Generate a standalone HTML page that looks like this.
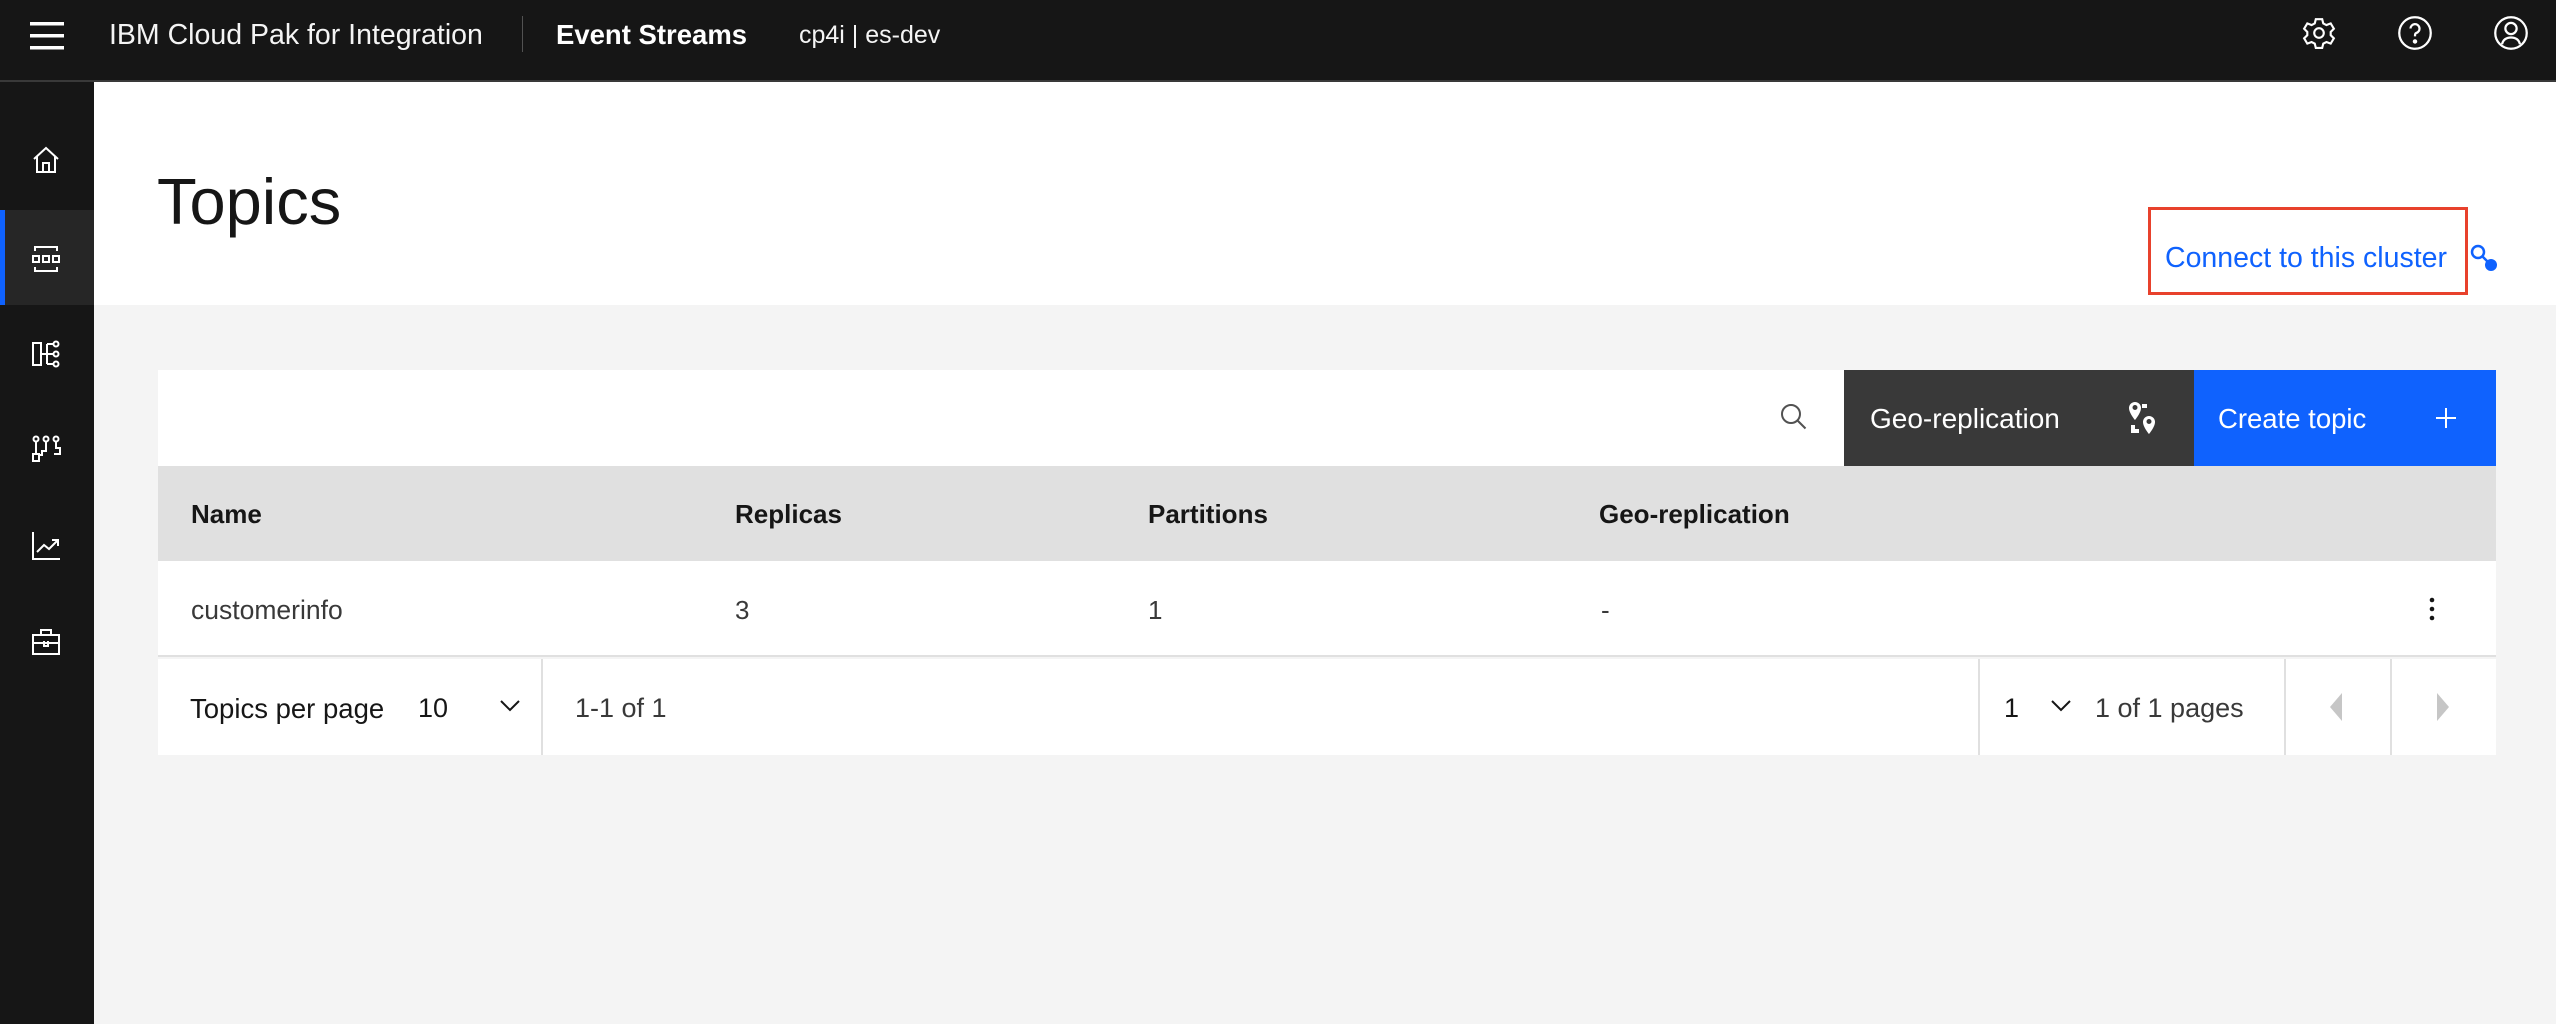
<!DOCTYPE html>
<html><head><meta charset="utf-8"><style>
*{margin:0;padding:0;box-sizing:border-box}
body{width:2556px;height:1024px;overflow:hidden;background:#f4f4f4;font-family:"Liberation Sans",sans-serif;position:relative;color:#161616}
.a{position:absolute;white-space:nowrap}
svg{position:absolute;overflow:visible}
</style></head><body>
<div class="a" style="left:0;top:0;width:2556px;height:80px;background:#161616"></div>
<div class="a" style="left:0;top:80px;width:2556px;height:2px;background:#393939"></div>
<div class="a" style="left:0;top:82px;width:94px;height:942px;background:#161616"></div>
<div class="a" style="left:0;top:210px;width:94px;height:95px;background:#262626"></div>
<div class="a" style="left:0;top:210px;width:5px;height:95px;background:#0f62fe"></div>
<div class="a" style="left:94px;top:82px;width:2462px;height:223px;background:#fff"></div>

<svg style="left:30px;top:22px" width="34" height="28"><rect x="0" y="0" width="34" height="3.5" fill="#fff"/><rect x="0" y="12" width="34" height="3.5" fill="#fff"/><rect x="0" y="24" width="34" height="3.5" fill="#fff"/></svg>
<div class="a" style="left:109px;top:19px;font-size:28.5px;color:#f4f4f4">IBM Cloud Pak for Integration</div>
<div class="a" style="left:522px;top:16px;width:1px;height:36px;background:#525252"></div>
<div class="a" style="left:556px;top:19px;font-size:27.5px;font-weight:bold;color:#fff">Event Streams</div>
<div class="a" style="left:799px;top:21px;font-size:25px;color:#f4f4f4">cp4i | es-dev</div>

<svg style="left:2302px;top:15px" width="34" height="36" viewBox="0 0 32 32" fill="none" stroke="#fff" stroke-width="2"><path d="M13 3h6l1 4 3 1.5 4-1.5 3 5-3 3v3l3 3-3 5-4-1.5-3 1.5-1 4h-6l-1-4-3-1.5-4 1.5-3-5 3-3v-3l-3-3 3-5 4 1.5 3-1.5z"/><circle cx="16" cy="16" r="4.5"/></svg>
<svg style="left:2397px;top:15px" width="36" height="36" viewBox="0 0 32 32" fill="none" stroke="#fff" stroke-width="2"><circle cx="16" cy="16" r="14"/><path d="M12 12a4 4 0 1 1 5 4c-1 .5-1 1.5-1 3"/><circle cx="16" cy="23.5" r="1" fill="#fff"/></svg>
<svg style="left:2493px;top:15px" width="36" height="36" viewBox="0 0 32 32" fill="none" stroke="#fff" stroke-width="2"><circle cx="16" cy="16" r="14"/><circle cx="16" cy="12" r="5"/><path d="M8 26c1-4 4-6 8-6s7 2 8 6"/></svg>

<svg style="left:32px;top:146px" width="28" height="28" viewBox="0 0 28 28" fill="none" stroke="#fff" stroke-width="2"><path d="M2 13L14 2l12 11M5 10v16h18V10M11 26v-9h6v9"/></svg>
<svg style="left:32px;top:245px" width="28" height="28" viewBox="0 0 28 28" fill="none" stroke="#fff" stroke-width="2"><path d="M3 6V2h22v4M3 22v4h22v-4"/><rect x="1" y="11" width="6" height="6"/><rect x="11" y="11" width="6" height="6"/><rect x="21" y="11" width="6" height="6"/></svg>
<svg style="left:32px;top:340px" width="28" height="28" viewBox="0 0 28 28" fill="none" stroke="#fff" stroke-width="2"><rect x="1" y="3" width="8" height="22"/><path d="M9 14h13M15 4v20M15 4h6M15 24h6"/><circle cx="24" cy="4" r="2.5"/><circle cx="24" cy="14" r="2.5"/><circle cx="24" cy="24" r="2.5"/></svg>
<svg style="left:32px;top:435px" width="28" height="28" viewBox="0 0 28 28" fill="none" stroke="#fff" stroke-width="2"><circle cx="4" cy="4" r="2.5"/><circle cx="14" cy="4" r="2.5"/><circle cx="24" cy="4" r="2.5"/><path d="M4 7v12M14 7v9h-4v4h-4M24 7v6h4v6h-6"/><rect x="1" y="19" width="6" height="7"/></svg>
<svg style="left:32px;top:532px" width="28" height="28" viewBox="0 0 28 28" fill="none" stroke="#fff" stroke-width="2"><path d="M1 0v27h27M5 20l7-7 5 4 9-9M20 8h6v6"/></svg>
<svg style="left:32px;top:628px" width="28" height="28" viewBox="0 0 28 28" fill="none" stroke="#fff" stroke-width="2"><rect x="1" y="7" width="26" height="19"/><path d="M9 7V2h10v5M1 15h26M12 13v5h4v-5"/></svg>

<div class="a" style="left:157px;top:164px;font-size:65px;font-weight:300;color:#161616">Topics</div>
<div class="a" style="left:2148px;top:207px;width:320px;height:88px;border:3px solid #e8412c"></div>
<div class="a" style="left:2165px;top:242px;font-size:28.5px;color:#0f62fe">Connect to this cluster</div>
<svg style="left:2470px;top:244px" width="30" height="30"><circle cx="8" cy="8" r="6" fill="none" stroke="#0f62fe" stroke-width="2.5"/><path d="M12 12l7 7" stroke="#0f62fe" stroke-width="2.5"/><circle cx="21" cy="21" r="6" fill="#0f62fe"/></svg>

<div class="a" style="left:158px;top:370px;width:1686px;height:96px;background:#fff"></div>
<svg style="left:1780px;top:403px" width="28" height="30" viewBox="0 0 28 30" fill="none" stroke="#525252" stroke-width="2"><circle cx="11" cy="11" r="9"/><path d="M17.5 17.5l8 8"/></svg>
<div class="a" style="left:1844px;top:370px;width:350px;height:96px;background:#393939"></div>
<div class="a" style="left:1870px;top:403px;font-size:28px;color:#fff">Geo-replication</div>
<svg style="left:2128px;top:402px" width="32" height="34" viewBox="0 0 32 34" fill="#fff"><path d="M7 0a6 6 0 0 0-6 6c0 5 6 12 6 12s6-7 6-12a6 6 0 0 0-6-6zm0 8a2.5 2.5 0 1 1 0-5 2.5 2.5 0 0 1 0 5z"/><path d="M21 14a6 6 0 0 0-6 6c0 5 6 12 6 12s6-7 6-12a6 6 0 0 0-6-6zm0 8a2.5 2.5 0 1 1 0-5 2.5 2.5 0 0 1 0 5z"/><rect x="14" y="2" width="5" height="4"/><rect x="3" y="23" width="4" height="8"/><rect x="3" y="27" width="8" height="4"/></svg>
<div class="a" style="left:2194px;top:370px;width:302px;height:96px;background:#0f62fe"></div>
<div class="a" style="left:2218px;top:403px;font-size:27.5px;color:#fff">Create topic</div>
<svg style="left:2436px;top:408px" width="20" height="20"><path d="M10 0v20M0 10h20" stroke="#fff" stroke-width="2"/></svg>

<div class="a" style="left:158px;top:466px;width:2338px;height:95px;background:#e0e0e0"></div>
<div class="a" style="left:191px;top:499px;font-size:26px;font-weight:bold">Name</div>
<div class="a" style="left:735px;top:499px;font-size:26px;font-weight:bold">Replicas</div>
<div class="a" style="left:1148px;top:499px;font-size:26px;font-weight:bold">Partitions</div>
<div class="a" style="left:1599px;top:499px;font-size:26px;font-weight:bold">Geo-replication</div>

<div class="a" style="left:158px;top:561px;width:2338px;height:96px;background:#fff;border-bottom:2px solid #e0e0e0"></div>
<div class="a" style="left:191px;top:595px;font-size:26.5px;color:#393939">customerinfo</div>
<div class="a" style="left:735px;top:595px;font-size:26px;color:#393939">3</div>
<div class="a" style="left:1148px;top:595px;font-size:26px;color:#393939">1</div>
<div class="a" style="left:1601px;top:595px;font-size:26px;color:#393939">-</div>
<svg style="left:2428px;top:597px" width="8" height="26"><circle cx="4" cy="3" r="2.3" fill="#161616"/><circle cx="4" cy="12" r="2.3" fill="#161616"/><circle cx="4" cy="21" r="2.3" fill="#161616"/></svg>

<div class="a" style="left:158px;top:659px;width:2338px;height:96px;background:#fff"></div>
<div class="a" style="left:541px;top:659px;width:2px;height:96px;background:#e0e0e0"></div>
<div class="a" style="left:1978px;top:659px;width:2px;height:96px;background:#e0e0e0"></div>
<div class="a" style="left:2284px;top:659px;width:2px;height:96px;background:#e0e0e0"></div>
<div class="a" style="left:2390px;top:659px;width:2px;height:96px;background:#e0e0e0"></div>
<div class="a" style="left:190px;top:693px;font-size:27.5px;color:#161616">Topics per page</div>
<div class="a" style="left:418px;top:693px;font-size:27px;color:#161616">10</div>
<svg style="left:500px;top:700px" width="20" height="12"><path d="M1 1l9 9 9-9" fill="none" stroke="#161616" stroke-width="2"/></svg>
<div class="a" style="left:575px;top:693px;font-size:27px;color:#393939">1-1 of 1</div>
<div class="a" style="left:2004px;top:693px;font-size:27px;color:#161616">1</div>
<svg style="left:2051px;top:700px" width="20" height="12"><path d="M1 1l9 9 9-9" fill="none" stroke="#161616" stroke-width="2"/></svg>
<div class="a" style="left:2095px;top:693px;font-size:27px;color:#393939">1 of 1 pages</div>
<svg style="left:2330px;top:693px" width="12" height="28"><path d="M12 0v28L0 14z" fill="#c6c6c6"/></svg>
<svg style="left:2437px;top:693px" width="12" height="28"><path d="M0 0v28l12-14z" fill="#c6c6c6"/></svg>
</body></html>
